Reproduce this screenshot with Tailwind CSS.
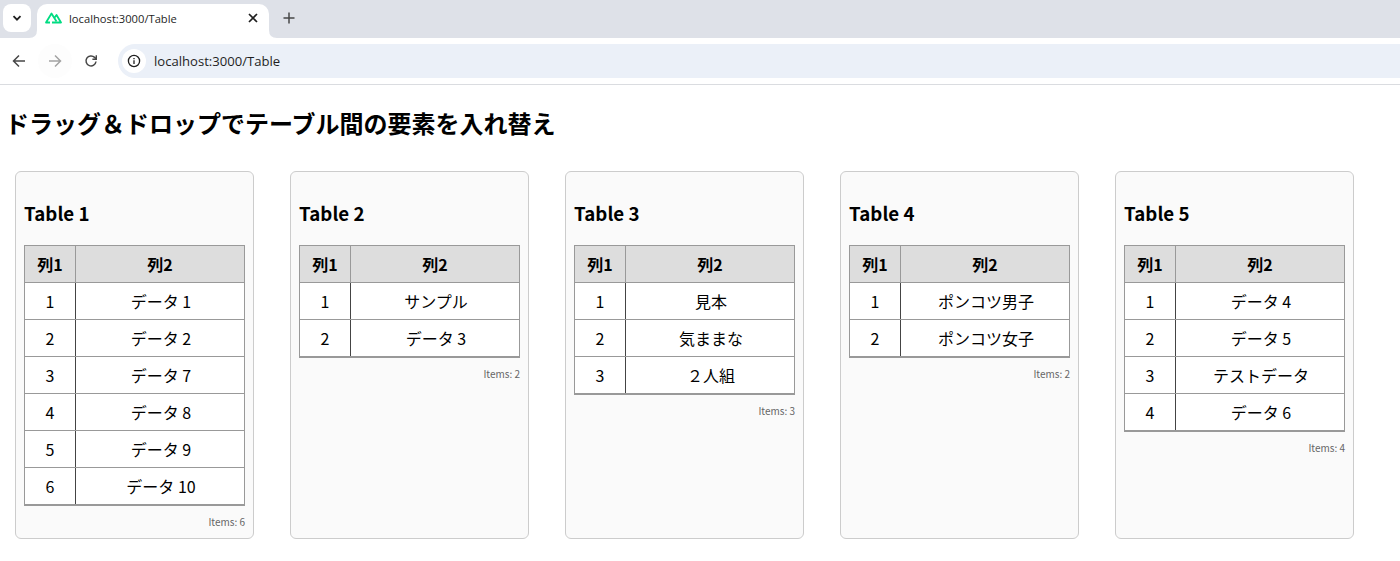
<!doctype html>
<html lang="ja"><head><meta charset="utf-8"><title>Table</title>
<script src="https://cdn.jsdelivr.net/npm/@tailwindcss/browser@4"></script></head>
<body class="bg-white text-black font-['Noto_Sans_CJK_JP','Noto_Sans',sans-serif] overflow-hidden h-[561px]">
<div class="h-[38px] bg-[#dee1e8] flex items-end relative">
  <div class="absolute left-[3px] top-[4px] w-[28px] h-[28px] bg-white rounded-lg flex items-center justify-center">
    <svg width="12" height="12" viewBox="0 0 12 12" fill="none" stroke="#1f1f1f" stroke-width="1.8"><path d="M2.5 4.2 6 7.7l3.5-3.5"/></svg>
  </div>
  <div class="ml-[37px] w-[232px] h-[34px] bg-white rounded-t-[10px] flex items-start pt-[5px] pl-[8px] text-[#1f1f1f] relative">
    <svg width="8" height="8" viewBox="0 0 8 8" fill="#ffffff" class="absolute left-[-8px] bottom-0"><path d="M8 0Q8 8 0 8H8z"/></svg>
    <svg width="17" height="12" viewBox="0 0 17 12" fill="none" stroke="#00dc82" stroke-width="1.8" stroke-linejoin="round" class="mr-[7px] mt-[3px]"><path d="M5 10.5H1L6.5 1.5 11.5 9.5"/><path d="M9.2 6 11.5 3 16 10.5H7"/></svg>
    <span class="font-['Open_Sans',sans-serif] text-[11.2px] leading-[20px]">localhost:3000/Table</span>
    <svg width="10" height="10" viewBox="0 0 10 10" stroke="#1f1f1f" stroke-width="1.7" class="absolute right-[11px] top-[9px]"><path d="M1 1l8 8M9 1 1 9"/></svg>
    <svg width="8" height="8" viewBox="0 0 8 8" fill="#ffffff" class="absolute right-[-8px] bottom-0"><path d="M0 0Q0 8 8 8H0z"/></svg>
  </div>
  <svg width="12" height="12" viewBox="0 0 12 12" stroke="#474747" stroke-width="1.5" class="ml-[14px] mb-[14px]"><path d="M6 .5v11M.5 6h11"/></svg>
</div>
<div class="h-[47px] border-b border-[#dadce0] bg-white flex items-center relative">
  <svg width="14" height="14" viewBox="0 0 14 14" fill="none" stroke="#474747" stroke-width="1.5" class="ml-[12px]"><path d="M13 7H1.5M7 1.5 1.5 7 7 12.5"/></svg>
  <span class="ml-[12px] w-[34px] h-[34px] rounded-full bg-[#fdfdfd] flex items-center justify-center">
    <svg width="14" height="14" viewBox="0 0 14 14" fill="none" stroke="#a3a3a3" stroke-width="1.5"><path d="M1 7h11.5M7 1.5 12.5 7 7 12.5"/></svg>
  </span>
  <svg width="14" height="14" viewBox="0 0 14 14" fill="none" stroke="#474747" stroke-width="1.5" class="ml-[12px]"><path d="M12 7.5A5 5 0 1 1 10.6 3.4L12 4.8"/><path d="M12.3 1.2v4H8.4" stroke-width="1.4"/></svg>
  <div class="ml-[20px] flex-1 h-[34px] bg-[#ebf0f8] rounded-l-[17px] flex items-center pl-[4px] font-['Open_Sans',sans-serif] text-[13.1px] text-[#1f1f1f]">
    <span class="w-[24px] h-[24px] bg-white rounded-full flex items-center justify-center mr-[8px]">
      <svg width="14" height="14" viewBox="0 0 14 14" fill="none" stroke="#1f1f1f" stroke-width="1.3"><circle cx="7" cy="7" r="5.6"/><path d="M7 6.3v3.6M7 4v1.3"/></svg>
    </span>
    <span class="mt-[1px]">localhost:3000/Table</span>
  </div>
</div>
<main>
  <h1 class="text-2xl leading-[36px] font-bold pt-[20px] pl-[5px] pb-[30px]">ドラッグ＆ドロップでテーブル間の要素を入れ替え</h1>
  <div class="flex gap-[36px] pl-[15px]">
    <section class="w-[239px] h-[368px] bg-[#fafafa] border border-[#cccccc] rounded-md px-[8px]">
      <h2 class="text-[18.72px] font-bold leading-[30px] mt-[26px] mb-[17px]">Table 1</h2>
      <table class="w-[221px] table-fixed border-collapse border-b-2 border-[#999] text-center text-[16px]">
        <thead><tr class="h-[37px] bg-[#dddddd] font-bold"><th class="w-[51px] border border-[#999]">列1</th><th class="border border-[#999]">列2</th></tr></thead>
        <tbody class="bg-white">
          <tr class="h-[37px]"><td class="border border-[#999] border-r-[#444]">1</td><td class="border border-[#999] border-l-[#444] pl-[2px]">データ 1</td></tr>
          <tr class="h-[37px]"><td class="border border-[#999] border-r-[#444]">2</td><td class="border border-[#999] border-l-[#444] pl-[2px]">データ 2</td></tr>
          <tr class="h-[37px]"><td class="border border-[#999] border-r-[#444]">3</td><td class="border border-[#999] border-l-[#444] pl-[2px]">データ 7</td></tr>
          <tr class="h-[37px]"><td class="border border-[#999] border-r-[#444]">4</td><td class="border border-[#999] border-l-[#444] pl-[2px]">データ 8</td></tr>
          <tr class="h-[37px]"><td class="border border-[#999] border-r-[#444]">5</td><td class="border border-[#999] border-l-[#444] pl-[2px]">データ 9</td></tr>
          <tr class="h-[37px]"><td class="border border-[#999] border-r-[#444]">6</td><td class="border border-[#999] border-l-[#444] pl-[2px]">データ 10</td></tr>
        </tbody>
      </table>
      <p class="text-right text-[10px] leading-[16px] text-[#666] mt-[8px]">Items: 6</p>
    </section>
    <section class="w-[239px] h-[368px] bg-[#fafafa] border border-[#cccccc] rounded-md px-[8px]">
      <h2 class="text-[18.72px] font-bold leading-[30px] mt-[26px] mb-[17px]">Table 2</h2>
      <table class="w-[221px] table-fixed border-collapse border-b-2 border-[#999] text-center text-[16px]">
        <thead><tr class="h-[37px] bg-[#dddddd] font-bold"><th class="w-[51px] border border-[#999]">列1</th><th class="border border-[#999]">列2</th></tr></thead>
        <tbody class="bg-white">
          <tr class="h-[37px]"><td class="border border-[#999] border-r-[#444]">1</td><td class="border border-[#999] border-l-[#444] pl-[2px]">サンプル</td></tr>
          <tr class="h-[37px]"><td class="border border-[#999] border-r-[#444]">2</td><td class="border border-[#999] border-l-[#444] pl-[2px]">データ 3</td></tr>
        </tbody>
      </table>
      <p class="text-right text-[10px] leading-[16px] text-[#666] mt-[8px]">Items: 2</p>
    </section>
    <section class="w-[239px] h-[368px] bg-[#fafafa] border border-[#cccccc] rounded-md px-[8px]">
      <h2 class="text-[18.72px] font-bold leading-[30px] mt-[26px] mb-[17px]">Table 3</h2>
      <table class="w-[221px] table-fixed border-collapse border-b-2 border-[#999] text-center text-[16px]">
        <thead><tr class="h-[37px] bg-[#dddddd] font-bold"><th class="w-[51px] border border-[#999]">列1</th><th class="border border-[#999]">列2</th></tr></thead>
        <tbody class="bg-white">
          <tr class="h-[37px]"><td class="border border-[#999] border-r-[#444]">1</td><td class="border border-[#999] border-l-[#444] pl-[2px]">見本</td></tr>
          <tr class="h-[37px]"><td class="border border-[#999] border-r-[#444]">2</td><td class="border border-[#999] border-l-[#444] pl-[2px]">気ままな</td></tr>
          <tr class="h-[37px]"><td class="border border-[#999] border-r-[#444]">3</td><td class="border border-[#999] border-l-[#444] pl-[2px]">２人組</td></tr>
        </tbody>
      </table>
      <p class="text-right text-[10px] leading-[16px] text-[#666] mt-[8px]">Items: 3</p>
    </section>
    <section class="w-[239px] h-[368px] bg-[#fafafa] border border-[#cccccc] rounded-md px-[8px]">
      <h2 class="text-[18.72px] font-bold leading-[30px] mt-[26px] mb-[17px]">Table 4</h2>
      <table class="w-[221px] table-fixed border-collapse border-b-2 border-[#999] text-center text-[16px]">
        <thead><tr class="h-[37px] bg-[#dddddd] font-bold"><th class="w-[51px] border border-[#999]">列1</th><th class="border border-[#999]">列2</th></tr></thead>
        <tbody class="bg-white">
          <tr class="h-[37px]"><td class="border border-[#999] border-r-[#444]">1</td><td class="border border-[#999] border-l-[#444] pl-[2px]">ポンコツ男子</td></tr>
          <tr class="h-[37px]"><td class="border border-[#999] border-r-[#444]">2</td><td class="border border-[#999] border-l-[#444] pl-[2px]">ポンコツ女子</td></tr>
        </tbody>
      </table>
      <p class="text-right text-[10px] leading-[16px] text-[#666] mt-[8px]">Items: 2</p>
    </section>
    <section class="w-[239px] h-[368px] bg-[#fafafa] border border-[#cccccc] rounded-md px-[8px]">
      <h2 class="text-[18.72px] font-bold leading-[30px] mt-[26px] mb-[17px]">Table 5</h2>
      <table class="w-[221px] table-fixed border-collapse border-b-2 border-[#999] text-center text-[16px]">
        <thead><tr class="h-[37px] bg-[#dddddd] font-bold"><th class="w-[51px] border border-[#999]">列1</th><th class="border border-[#999]">列2</th></tr></thead>
        <tbody class="bg-white">
          <tr class="h-[37px]"><td class="border border-[#999] border-r-[#444]">1</td><td class="border border-[#999] border-l-[#444] pl-[2px]">データ 4</td></tr>
          <tr class="h-[37px]"><td class="border border-[#999] border-r-[#444]">2</td><td class="border border-[#999] border-l-[#444] pl-[2px]">データ 5</td></tr>
          <tr class="h-[37px]"><td class="border border-[#999] border-r-[#444]">3</td><td class="border border-[#999] border-l-[#444] pl-[2px]">テストデータ</td></tr>
          <tr class="h-[37px]"><td class="border border-[#999] border-r-[#444]">4</td><td class="border border-[#999] border-l-[#444] pl-[2px]">データ 6</td></tr>
        </tbody>
      </table>
      <p class="text-right text-[10px] leading-[16px] text-[#666] mt-[8px]">Items: 4</p>
    </section>
  </div>
</main>
</body></html>
